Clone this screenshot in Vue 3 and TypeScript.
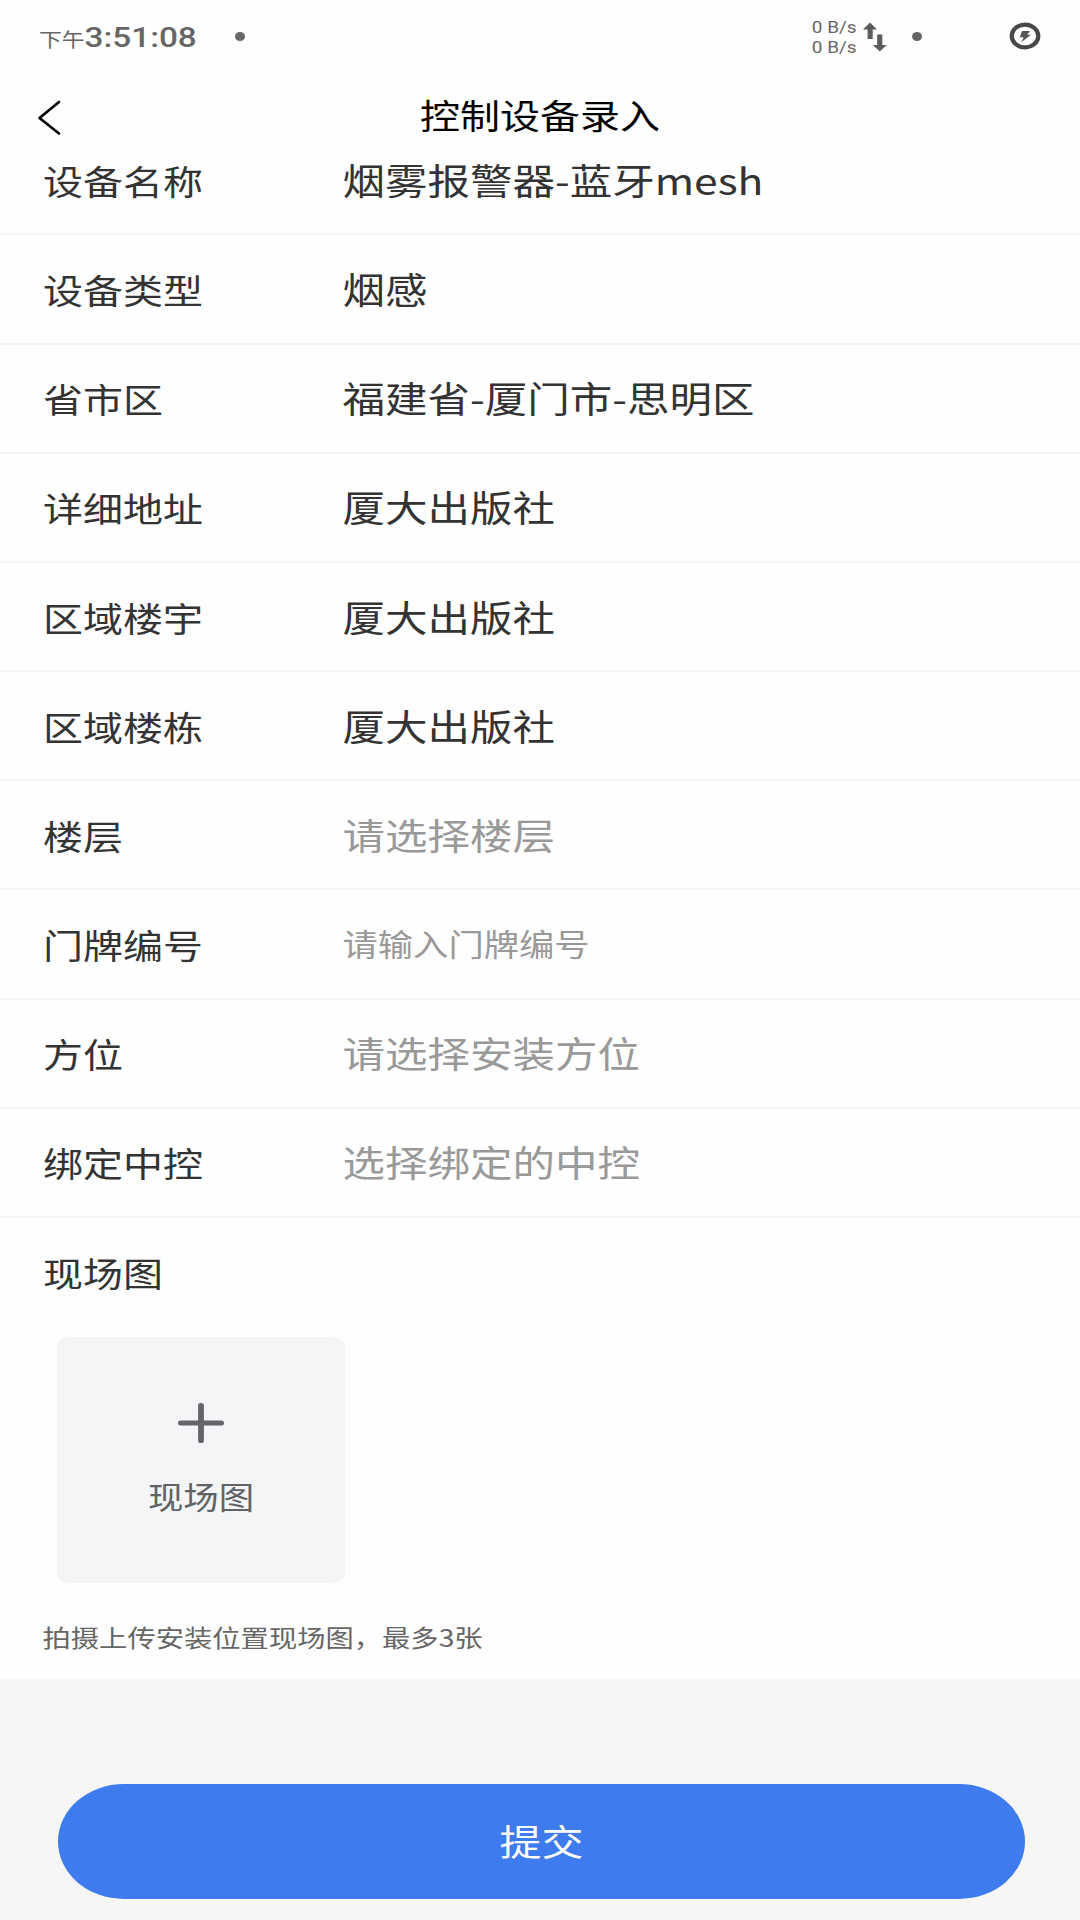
<script setup lang="ts">
interface Row {
  label: string
  value: string
  kind?: 'hint' | 'input'
}

const rows: Row[] = [
  { label: '设备名称', value: '烟雾报警器-蓝牙mesh' },
  { label: '设备类型', value: '烟感' },
  { label: '省市区', value: '福建省-厦门市-思明区' },
  { label: '详细地址', value: '厦大出版社' },
  { label: '区域楼宇', value: '厦大出版社' },
  { label: '区域楼栋', value: '厦大出版社' },
  { label: '楼层', value: '请选择楼层', kind: 'hint' },
  { label: '门牌编号', value: '请输入门牌编号', kind: 'input' },
  { label: '方位', value: '请选择安装方位', kind: 'hint' },
  { label: '绑定中控', value: '选择绑定的中控', kind: 'hint' },
]
</script>

<template>
  <div class="page">
    <div class="status">
      <span class="ampm t">下午</span>
      <span class="time t">3:51:08</span>
      <i class="dot dot-left"></i>
      <div class="speed">
        <span class="t">0 B/s</span>
        <span class="t">0 B/s</span>
      </div>
      <svg class="arrows" width="24" height="30" viewBox="0 0 24 30">
        <path d="M7 0.5L14 7.5H9.7V17H4.6V7.5H0ZM14.2 12.5H19.3V23H23.7L16.8 29.5L9.8 23H14.2Z" fill="#5c5c5c" />
      </svg>
      <i class="dot dot-right"></i>
      <svg class="power" width="32" height="28" viewBox="0 0 32 28">
        <ellipse cx="16" cy="14" rx="13.3" ry="11.3" fill="none" stroke="#484848" stroke-width="4.2" />
        <path d="M13 9H21L18.2 12.7H22L12.3 20.3L14.6 15.2H10.8Z" fill="#555" />
      </svg>
    </div>

    <header class="header">
      <svg class="back" width="24" height="36" viewBox="0 0 24 36">
        <path d="M22 2L2.5 18L22 33.5" fill="none" stroke="#000" stroke-width="2.7" stroke-linecap="round" stroke-linejoin="round" />
      </svg>
      <h1 class="title t">控制设备录入</h1>
    </header>

    <main class="form">
      <div v-for="row in rows" :key="row.label" class="row">
        <span class="label t">{{ row.label }}</span>
        <span class="value t" :class="row.kind">{{ row.value }}</span>
      </div>
      <section class="photos">
        <div class="label heading t">现场图</div>
        <div class="tile">
          <svg class="plus" width="46" height="40" viewBox="0 0 46 40">
            <rect x="0" y="17.5" width="46" height="5" rx="2.5" />
            <rect x="20.1" y="0" width="5.8" height="40" rx="2.6" />
          </svg>
          <span class="tile-text t">现场图</span>
        </div>
        <p class="note t">拍摄上传安装位置现场图，最多3张</p>
      </section>
    </main>

    <footer class="footer">
      <button class="submit" type="button"><span class="t">提交</span></button>
    </footer>
  </div>
</template>

<style>
body {
  margin: 0;
  background: #f6f6f7;
}
</style>

<style scoped>
.page {
  display: flex;
  flex-direction: column;
  width: 1080px;
  height: 1920px;
  overflow: hidden;
  background: #f6f6f7;
  font-family: "Noto Sans CJK SC", sans-serif;
}
/* Glyphs are drawn slightly wider than tall */
.t {
  display: block;
  transform: scaleY(0.854);
  white-space: nowrap;
}
.status {
  display: flex;
  align-items: center;
  flex: none;
  height: 72px;
  padding-left: 39px;
  box-sizing: border-box;
  background: #fefefe;
  color: #666;
}
.ampm {
  margin-top: 5px;
  font-size: 22.8px;
  line-height: 30px;
}
.time {
  margin-top: 3px;
  font-family: Roboto, sans-serif;
  font-weight: 500;
  font-size: 33.3px;
  line-height: 40px;
}
.dot {
  width: 10px;
  height: 9px;
  border-radius: 50%;
  background: #666;
}
.dot-left {
  margin-left: 38px;
}
.speed {
  width: 46px;
  margin-left: 567px;
  margin-top: 3px;
  font-family: Roboto, sans-serif;
  font-size: 19px;
  line-height: 19.6px;
}
.arrows {
  margin-left: 5px;
  margin-top: 1px;
}
.dot-right {
  margin-left: 25px;
}
.power {
  margin-left: 87px;
}
.header {
  display: grid;
  grid-template-columns: 60px 1fr 60px;
  align-items: center;
  flex: none;
  z-index: 1;
  height: 82px;
  background: #fefefe;
}
.back {
  margin-left: 37px;
  margin-top: 9px;
}
.title {
  margin: 2px 0 0;
  font-size: 40px;
  font-weight: 400;
  line-height: 60px;
  text-align: center;
  color: #000;
}
.form {
  flex: none;
  height: 1552.7px;
  margin-top: -27.7px;
  background: #fefefe;
}
.row {
  display: flex;
  align-items: center;
  height: 109.17px;
  padding-left: 43px;
  box-sizing: border-box;
  border-bottom: 2px solid #f4f4f4;
}
.label {
  width: 299.5px;
  font-size: 40px;
  line-height: 60px;
  color: #333;
}
.value {
  font-size: 42.5px;
  line-height: 60px;
  color: #333;
}
.hint {
  color: #999;
}
.input {
  font-size: 35.3px;
  line-height: 58px;
  margin-top: -1px;
  color: #999;
}
.photos {
  padding: 24px 43px 0;
}
.tile {
  display: flex;
  flex-direction: column;
  align-items: center;
  width: 288px;
  height: 246px;
  margin: 35.5px 0 0 14px;
  border-radius: 11px / 10px;
  background: #f4f5f7;
}
.plus {
  flex: none;
  margin-top: 66px;
  fill: #636568;
}
.tile-text {
  margin-top: 30.5px;
  font-size: 35.4px;
  line-height: 44px;
  color: #606266;
}
.note {
  margin: 33.5px 0 0 -0.5px;
  font-size: 28.3px;
  line-height: 40px;
  color: #666;
}
.footer {
  padding: 105px 55px 0 58px;
}
.submit {
  display: flex;
  align-items: center;
  justify-content: center;
  width: 100%;
  height: 115px;
  padding: 0 0 2px;
  border: 0;
  border-radius: 66px / 57.5px;
  background: #3d7bee;
  color: #fff;
  font-family: inherit;
  font-size: 42px;
  line-height: 60px;
}
</style>
